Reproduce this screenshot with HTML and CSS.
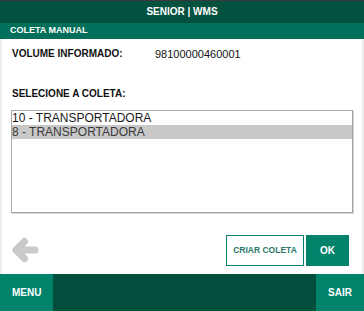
FILE: index.html
```html
<!DOCTYPE html>
<html lang="pt-BR">
<head>
  <meta charset="UTF-8">
  <meta name="viewport" content="width=device-width, initial-scale=1.0">
  <title>Senior | WMS</title>
  <link rel="stylesheet" href="styles.css">
</head>
<body>
  <div class="app">
    <header class="topbar">SENIOR | WMS</header>
    <div class="subbar">COLETA MANUAL</div>

    <main class="content">
      <div class="volume">
        <span class="volume-label">VOLUME INFORMADO:</span>
        <span class="volume-value">98100000460001</span>
      </div>

      <div class="select-label">SELECIONE A COLETA:</div>
      <ul class="listbox">
        <li>10 - TRANSPORTADORA</li>
        <li class="selected">8 - TRANSPORTADORA</li>
      </ul>

      <div class="actions">
        <a class="back" href="#">
          <svg width="28" height="26" viewBox="0 0 28 26">
            <path d="M24 13 H5 M13.5 4.5 L5 13 L13.5 21.5" fill="none" stroke="#c9c9c9" stroke-width="7" stroke-linecap="round" stroke-linejoin="round"/>
          </svg>
        </a>
        <div class="buttons">
          <button class="btn btn-outline">CRIAR COLETA</button>
          <button class="btn btn-ok">OK</button>
        </div>
      </div>
    </main>

    <footer class="footer">
      <a class="footer-btn" href="#">MENU</a>
      <a class="footer-btn" href="#">SAIR</a>
    </footer>
  </div>
</body>
</html>
```

FILE: styles.css
```css
body {
  margin: 0;
  font-family: "Liberation Sans", Arial, sans-serif;
  background-color: #fff;
}

.app {
  width: 364px;
  height: 311px;
  display: flex;
  flex-direction: column;
  border-top: 1px solid #3a3a3a;
  box-sizing: border-box;
}

.topbar {
  height: 22px;
  line-height: 21px;
  background-color: #03513f;
  color: #fff;
  font-size: 10px;
  font-weight: bold;
  text-align: center;
}

.subbar {
  height: 15px;
  line-height: 15px;
  padding-left: 10px;
  background-color: #00705a;
  border-bottom: 1px solid #0b6a56;
  color: #fff;
  font-size: 9px;
  font-weight: bold;
}

.content {
  flex: 1;
  display: flex;
  flex-direction: column;
  padding: 8px 9px 8px 9px;
  border-left: 2px solid #ececec;
  border-right: 2px solid #ececec;
}

.volume {
  display: flex;
  align-items: center;
  height: 14px;
  padding-left: 1px;
}

.volume-label {
  width: 143px;
  font-size: 10px;
  font-weight: bold;
  color: #111;
}

.volume-value {
  font-size: 11px;
  color: #111;
}

.select-label {
  margin-top: 26px;
  height: 14px;
  line-height: 14px;
  padding-left: 1px;
  font-size: 10px;
  font-weight: bold;
  color: #111;
}

.listbox {
  list-style: none;
  margin: 9px 0 0 0;
  padding: 0;
  height: 103px;
  box-sizing: border-box;
  border: 1px solid #aaa;
  border-right-color: #a3a3a3;
  border-bottom-color: #a3a3a3;
  box-shadow: 1px 1px 0 #d6d6d6;
}

.listbox li {
  height: 14px;
  line-height: 14px;
  font-size: 12px;
  color: #1a1a1a;
}

.listbox li.selected {
  background-color: #c8c8c8;
  color: #3a3a3a;
}

.actions {
  margin-top: 22px;
  display: flex;
  justify-content: space-between;
  align-items: center;
  padding-right: 4px;
}

.back {
  display: flex;
}

.buttons {
  display: flex;
  gap: 2px;
}

.btn {
  height: 31px;
  border: 1px solid #00826b;
  font-family: "Liberation Sans", Arial, sans-serif;
  font-weight: bold;
  padding: 0;
  cursor: pointer;
}

.btn-outline {
  width: 78px;
  background-color: #fff;
  color: #2a7a6a;
  font-size: 8.5px;
}

.btn-ok {
  width: 43px;
  background-color: #00826b;
  color: #fff;
  font-size: 10px;
}

.footer {
  height: 38px;
  display: flex;
  justify-content: space-between;
  background-color: #034f3d;
}

.footer-btn {
  display: flex;
  align-items: center;
  padding: 0 12px;
  background-color: #00826b;
  color: #fff;
  font-size: 10px;
  font-weight: bold;
  text-decoration: none;
}
```
